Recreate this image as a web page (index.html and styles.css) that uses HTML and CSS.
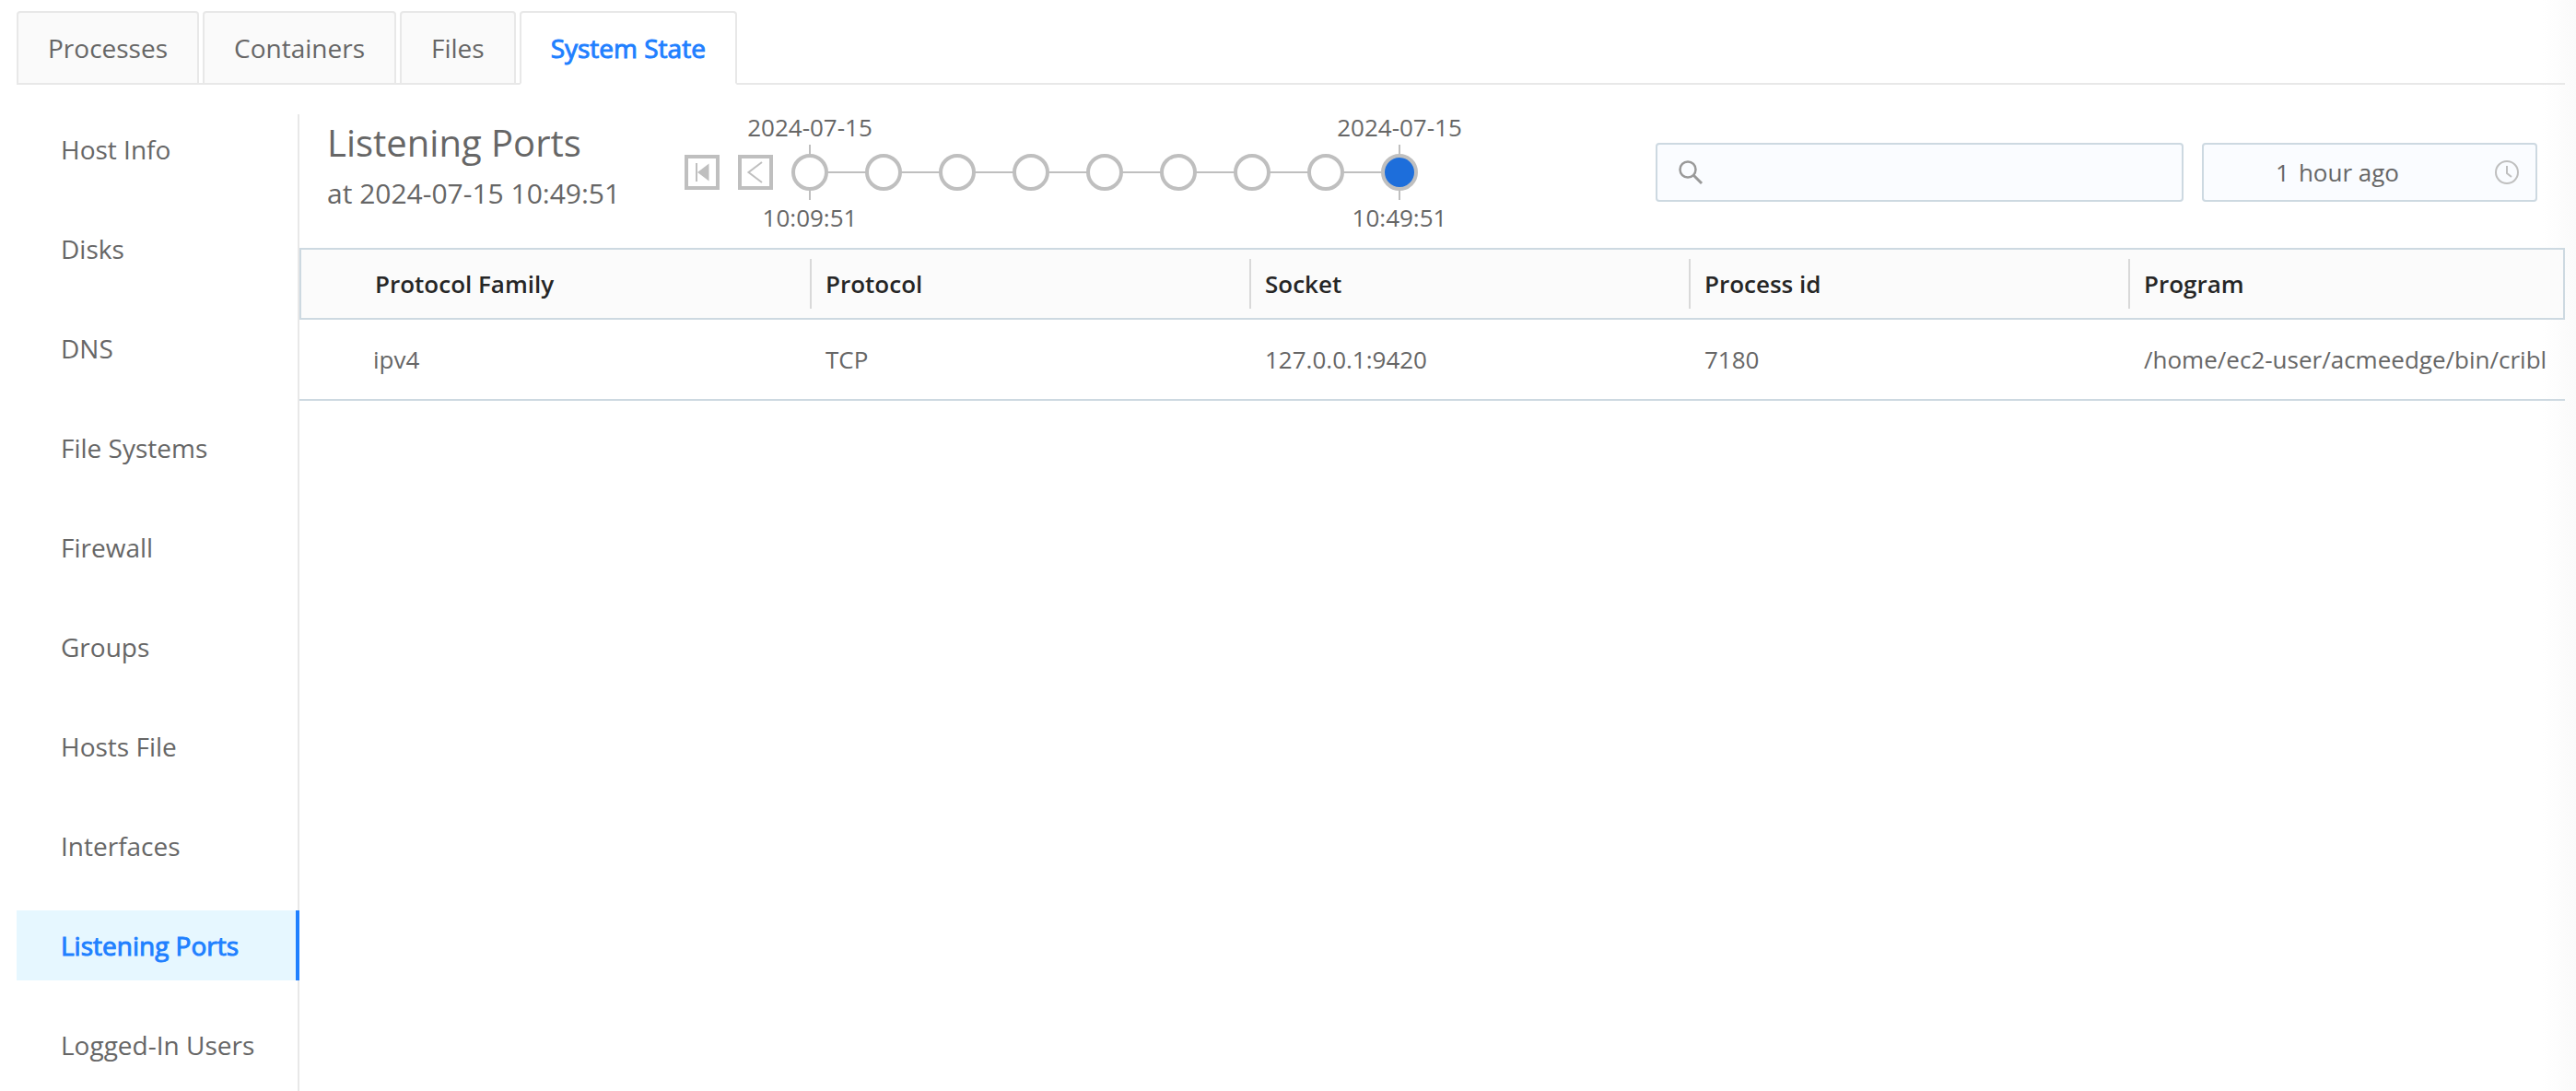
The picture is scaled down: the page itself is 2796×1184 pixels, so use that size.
FILE: index.html
```html
<!DOCTYPE html>
<html lang="en">
<head>
<meta charset="utf-8">
<title>System State</title>
<link rel="stylesheet" href="styles.css">
</head>
<body>
<div class="page">
  <nav class="tabs" aria-label="Views">
    <button class="tab" type="button">Processes</button>
    <button class="tab" type="button">Containers</button>
    <button class="tab" type="button">Files</button>
    <button class="tab tab-active" type="button">System State</button>
  </nav>
  <div class="body">
    <nav class="side" aria-label="System state">
      <a class="side-link" href="#host-info">Host Info</a>
      <a class="side-link" href="#disks">Disks</a>
      <a class="side-link" href="#dns">DNS</a>
      <a class="side-link" href="#file-systems">File Systems</a>
      <a class="side-link" href="#firewall">Firewall</a>
      <a class="side-link" href="#groups">Groups</a>
      <a class="side-link" href="#hosts-file">Hosts File</a>
      <a class="side-link" href="#interfaces">Interfaces</a>
      <a class="side-link side-active" href="#listening-ports">Listening Ports</a>
      <a class="side-link" href="#users">Logged-In Users</a>
    </nav>
    <main class="main">
      <header class="bar">
        <div class="heading">
          <h1 class="title">Listening Ports</h1>
          <p class="subtitle">at 2024-07-15 10:49:51</p>
        </div>
        <div class="history">
          <button class="step" type="button" aria-label="First">
            <svg width="30" height="30" viewBox="0 0 30 30"><path d="M9 5v20" stroke="currentColor" stroke-width="2"/><path d="M22.500 5.500v19L10 15z" fill="currentColor"/></svg>
          </button>
          <button class="step" type="button" aria-label="Previous">
            <svg width="30" height="30" viewBox="0 0 30 30"><path d="M22 4L7.500 15L22 26" fill="none" stroke="currentColor" stroke-width="2"/></svg>
          </button>
          <ol class="points">
            <li class="point point-labelled"><span class="label">2024-07-15</span><button class="dot" type="button" aria-label="10:09:51"></button><span class="label">10:09:51</span></li>
            <li class="point"><button class="dot" type="button" aria-label="Snapshot 2"></button></li>
            <li class="point"><button class="dot" type="button" aria-label="Snapshot 3"></button></li>
            <li class="point"><button class="dot" type="button" aria-label="Snapshot 4"></button></li>
            <li class="point"><button class="dot" type="button" aria-label="Snapshot 5"></button></li>
            <li class="point"><button class="dot" type="button" aria-label="Snapshot 6"></button></li>
            <li class="point"><button class="dot" type="button" aria-label="Snapshot 7"></button></li>
            <li class="point"><button class="dot" type="button" aria-label="Snapshot 8"></button></li>
            <li class="point point-labelled"><span class="label">2024-07-15</span><button class="dot dot-current" type="button" aria-label="10:49:51"></button><span class="label">10:49:51</span></li>
          </ol>
        </div>
        <div class="filters">
          <label class="field search">
            <svg class="search-icon" width="28" height="28" viewBox="0 0 28 28" fill="none" stroke="currentColor"><circle cx="11" cy="11" r="8.500" stroke-width="2.500"/><path d="M17 17l9 9" stroke-width="3"/></svg>
            <input class="search-input" type="text" aria-label="Search">
          </label>
          <button class="field time" type="button">
            <span class="time-text"><span>1</span><span>hour ago</span></span>
            <svg class="clock-icon" width="26" height="26" viewBox="0 0 26 26" fill="none" stroke="currentColor" stroke-width="2"><circle cx="13" cy="13" r="12"/><path d="M13 6v8l5 4"/></svg>
          </button>
        </div>
      </header>
      <table class="grid">
        <colgroup><col class="col-first"><col class="col"><col class="col"><col class="col"><col></colgroup>
        <thead>
          <tr><th>Protocol Family</th><th>Protocol</th><th>Socket</th><th>Process id</th><th>Program</th></tr>
        </thead>
        <tbody>
          <tr><td>ipv4</td><td>TCP</td><td>127.0.0.1:9420</td><td>7180</td><td>/home/ec2-user/acmeedge/bin/cribl</td></tr>
        </tbody>
      </table>
    </main>
  </div>
</div>
</body>
</html>
```
FILE: styles.css
```css
* { box-sizing: border-box; }

body {
  margin: 0;
  background: #fff;
  color: #666;
  font-family: "Open Sans", sans-serif;
  font-size: 28px;
  line-height: 44px;
}

button, input { font: inherit; color: inherit; }

.page {
  display: flex;
  flex-direction: column;
  min-height: 100vh;
  padding: 12px 12px 0 18px;
  background: linear-gradient(to left, #fafafa, #fff 36px);
}

.tabs {
  display: flex;
  gap: 4px;
  height: 80px;
  flex: none;
  box-shadow: inset 0 -2px #e8e8e8;
}

.tab {
  padding: 0 32px;
  border: 2px solid #e8e8e8;
  border-radius: 4px 4px 0 0;
  background: #fafafa;
}

.tab-active {
  border-bottom-color: #fff;
  background: #fff;
  color: #1f80ff;
  -webkit-text-stroke: 1px currentColor;
}

.body {
  display: flex;
  flex: 1;
  margin-top: 32px;
}

.side {
  display: flex;
  flex-direction: column;
  flex: none;
  gap: 32px;
  width: 307px;
  box-shadow: inset -2px 0 #e8e8e8;
}

.side-link {
  padding: 16px 48px;
  color: inherit;
  text-decoration: none;
  white-space: nowrap;
}

.side-active {
  border-right: 4px solid #1f80ff;
  background: #e6f7ff;
  color: #1f80ff;
  padding-right: 44px;
  -webkit-text-stroke: 1px currentColor;
}

.main { flex: 1; min-width: 0; }

.bar {
  display: flex;
  height: 145px;
  padding: 0 30px;
}

.heading { width: 388px; flex: none; }

.title {
  margin: 0;
  font-size: 40px;
  font-weight: 400;
  line-height: 62px;
}

.subtitle {
  margin: 0;
  font-size: 30px;
  line-height: 48px;
}

.history {
  display: flex;
  align-items: center;
  gap: 20px;
  height: 126px;
}

.step {
  display: grid;
  place-items: center;
  width: 38px;
  height: 38px;
  padding: 0;
  border: 4px solid #bfbfbf;
  background: #fff;
  color: #bfbfbf;
}

.points {
  display: flex;
  gap: 40px;
  margin: 0;
  padding: 0;
  list-style: none;
  background: linear-gradient(#bfbfbf, #bfbfbf) center / 95% 2px no-repeat;
}

.point {
  display: flex;
  flex-direction: column;
  align-items: center;
  justify-content: center;
  width: 40px;
  height: 126px;
}

.point-labelled {
  justify-content: space-between;
  background: linear-gradient(#bfbfbf, #bfbfbf) center / 2px 60px no-repeat;
}

.label {
  font-size: 26px;
  line-height: 28px;
  white-space: nowrap;
}

.dot {
  width: 40px;
  height: 40px;
  padding: 0;
  border: 4px solid #bfbfbf;
  border-radius: 50%;
  background: #fff;
}

.dot-current { background: #1d6edb; }

.filters {
  display: flex;
  gap: 20px;
  margin: 31px 0 0 auto;
}

.field {
  display: flex;
  align-items: center;
  height: 64px;
  border: 2px solid #cdd9e1;
  border-radius: 4px;
  background: #fafcff;
}

.search { width: 573px; padding: 0 22px; gap: 12px; }
.search-icon { flex: none; color: #999; }
.search-input { flex: 1; min-width: 0; border: 0; outline: 0; background: none; }

.time { width: 364px; padding: 0 18px 0 78px; font-size: 26px; }
.time-text { display: flex; flex: 1; gap: 10px; }
.clock-icon { flex: none; color: #bfbfbf; }

.grid {
  width: 100%;
  border-collapse: separate;
  border-spacing: 0;
  table-layout: fixed;
  font-size: 26px;
  text-align: left;
  white-space: nowrap;
}

.col-first { width: 554px; }
.col { width: 477px; }

.grid th {
  height: 78px;
  padding: 0 17px;
  border: 2px solid #cdd9e1;
  border-width: 2px 0;
  background: linear-gradient(#d9d9d9, #d9d9d9) left / 2px 54px no-repeat #fbfbfb;
  color: #262626;
  font-weight: 600;
}

.grid th:first-child {
  border-left-width: 2px;
  background: #fbfbfb;
}

.grid th:last-child { border-right-width: 2px; }

.grid td {
  height: 88px;
  padding: 0 17px;
  border-bottom: 2px solid #cdd9e1;
}

.grid th:first-child, .grid td:first-child { padding-left: 80px; }
```
